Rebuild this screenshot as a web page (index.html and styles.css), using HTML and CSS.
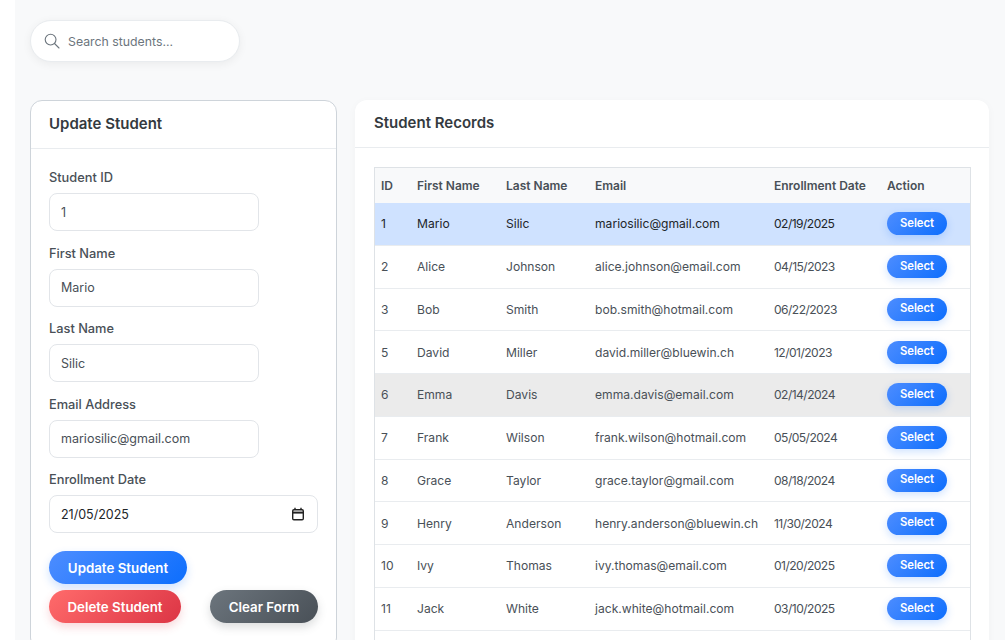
FILE: index.html
```html
<!DOCTYPE html>
<html lang="en">
<head>
    <meta charset="UTF-8">
    <meta name="viewport" content="width=device-width, initial-scale=1.0">
    <title>Student Records</title>
    <link rel="stylesheet" href="styles.css">
</head>
<body>
    <div class="page">
        <div class="search-box">
            <svg class="search-icon" width="16" height="16" viewBox="0 0 16 16" fill="none" stroke="#6c757d" stroke-width="1.1">
                <circle cx="6.6" cy="6.6" r="5.4"/>
                <path d="M10.5 10.5L15 15" stroke-linecap="round"/>
            </svg>
            <input type="text" placeholder="Search students...">
        </div>

        <div class="columns">
            <div class="card form-card">
                <h2 class="card-header">Update Student</h2>
                <form class="card-body">
                    <label for="student-id">Student ID</label>
                    <input class="short" id="student-id" type="text" value="1">
                    <label for="first-name">First Name</label>
                    <input class="short" id="first-name" type="text" value="Mario">
                    <label for="last-name">Last Name</label>
                    <input class="short" id="last-name" type="text" value="Silic">
                    <label for="email">Email Address</label>
                    <input class="short" id="email" type="text" value="mariosilic@gmail.com">
                    <label for="enrollment">Enrollment Date</label>
                    <div class="date-field">
                        <input id="enrollment" type="text" value="21/05/2025">
                        <svg width="14" height="14" viewBox="0 0 14 14" fill="none" stroke="#222" stroke-width="1.4">
                            <rect x="1.7" y="2.7" width="10.6" height="10" rx="1.2"/>
                            <path d="M1.7 5.6h10.6" stroke-width="2"/>
                            <path d="M4 .8v2M10 .8v2"/>
                        </svg>
                    </div>
                    <div class="btn-row">
                        <button type="button" class="btn btn-update">Update Student</button>
                    </div>
                    <div class="btn-row">
                        <button type="button" class="btn btn-delete">Delete Student</button>
                        <button type="button" class="btn btn-clear">Clear Form</button>
                    </div>
                </form>
            </div>

            <div class="card records-card">
                <h2 class="card-header">Student Records</h2>
                <div class="card-body">
                    <table>
                        <thead>
                            <tr>
                                <th class="col-id">ID</th>
                                <th class="col-name">First Name</th>
                                <th class="col-name">Last Name</th>
                                <th class="col-email">Email</th>
                                <th class="col-date">Enrollment Date</th>
                                <th class="col-action">Action</th>
                            </tr>
                        </thead>
                        <tbody>
                            <tr class="selected"><td>1</td><td>Mario</td><td>Silic</td><td>mariosilic@gmail.com</td><td class="date">02/19/2025</td><td><button class="select-btn">Select</button></td></tr>
                            <tr><td>2</td><td>Alice</td><td>Johnson</td><td>alice.johnson@email.com</td><td class="date">04/15/2023</td><td><button class="select-btn">Select</button></td></tr>
                            <tr><td>3</td><td>Bob</td><td>Smith</td><td>bob.smith@hotmail.com</td><td class="date">06/22/2023</td><td><button class="select-btn">Select</button></td></tr>
                            <tr><td>5</td><td>David</td><td>Miller</td><td>david.miller@bluewin.ch</td><td class="date">12/01/2023</td><td><button class="select-btn">Select</button></td></tr>
                            <tr class="hovered"><td>6</td><td>Emma</td><td>Davis</td><td>emma.davis@email.com</td><td class="date">02/14/2024</td><td><button class="select-btn">Select</button></td></tr>
                            <tr><td>7</td><td>Frank</td><td>Wilson</td><td>frank.wilson@hotmail.com</td><td class="date">05/05/2024</td><td><button class="select-btn">Select</button></td></tr>
                            <tr><td>8</td><td>Grace</td><td>Taylor</td><td>grace.taylor@gmail.com</td><td class="date">08/18/2024</td><td><button class="select-btn">Select</button></td></tr>
                            <tr><td>9</td><td>Henry</td><td>Anderson</td><td>henry.anderson@bluewin.ch</td><td class="date">11/30/2024</td><td><button class="select-btn">Select</button></td></tr>
                            <tr><td>10</td><td>Ivy</td><td>Thomas</td><td>ivy.thomas@email.com</td><td class="date">01/20/2025</td><td><button class="select-btn">Select</button></td></tr>
                            <tr><td>11</td><td>Jack</td><td>White</td><td>jack.white@hotmail.com</td><td class="date">03/10/2025</td><td><button class="select-btn">Select</button></td></tr>
                            <tr><td colspan="6"></td></tr>
                        </tbody>
                    </table>
                </div>
            </div>
        </div>
    </div>
</body>
</html>
```

FILE: styles.css
```css
* {
    box-sizing: border-box;
}
html, body {
    margin: 0;
    height: 640px;
    overflow: hidden;
    background-color: #fff;
}
body {
    font-family: Inter, "Open Sans", sans-serif;
    color: #343a40;
}
.page {
    margin: 0 1px 0 15px;
    padding: 20px 15px 0 15px;
    background-color: #f8f9fa;
    min-height: 640px;
}

/* search */
.search-box {
    display: flex;
    align-items: center;
    width: 210px;
    height: 42px;
    padding: 0 13px;
    gap: 8px;
    background-color: #fff;
    border: 1px solid #e9ecef;
    border-radius: 21px;
    box-shadow: 0 2px 10px rgba(0, 0, 0, 0.06);
}
.search-box input {
    flex: 1;
    min-width: 0;
    border: none;
    outline: none;
    padding: 0;
    font: 12.3px Inter, sans-serif;
    color: #495057;
}
.search-box input::placeholder {
    color: #6c757d;
}

/* layout */
.columns {
    display: flex;
    align-items: flex-start;
    gap: 18px;
    margin-top: 38px;
}
.card {
    background-color: #fff;
    border-radius: 12px;
}
.form-card {
    width: 307px;
    flex-shrink: 0;
    border: 1px solid #ced4da;
}
.records-card {
    width: 634px;
    box-shadow: 0 2px 10px rgba(0, 0, 0, 0.03);
}
.card-header {
    margin: 0;
    height: 48px;
    padding: 0 19px;
    line-height: 46px;
    font-size: 15px;
    font-weight: 600;
    color: #343a40;
    border-bottom: 1px solid #e9ecef;
}
.form-card .card-header {
    padding-left: 18px;
}
.form-card .card-body {
    padding: 20px 18px 20px;
}
.records-card .card-body {
    padding: 19px 18px 20px 19px;
}

/* form */
label {
    display: block;
    height: 17px;
    margin-bottom: 7px;
    line-height: 17px;
    font-size: 12.8px;
    font-weight: 500;
    color: #495057;
}
form input {
    display: block;
    width: 100%;
    height: 38px;
    padding: 0 11px;
    margin-bottom: 13.5px;
    font: 12.5px Inter, sans-serif;
    color: #495057;
    background-color: #fff;
    border: 1px solid #e2e5e9;
    border-radius: 8px;
}
form input.short {
    width: 210px;
}
.date-field {
    position: relative;
    margin-bottom: 18px;
}
.date-field input {
    margin-bottom: 0;
    color: #212529;
}
.date-field svg {
    position: absolute;
    right: 13px;
    top: 12px;
}
.btn-row {
    display: flex;
    justify-content: space-between;
    margin-bottom: 6px;
}
.btn {
    height: 33px;
    padding: 0;
    border: none;
    border-radius: 17px;
    font: 600 13.3px Inter, sans-serif;
    color: #fff;
}
.btn-update {
    width: 138px;
    background: linear-gradient(135deg, #4d8dff, #0d6efd);
    box-shadow: 0 4px 10px rgba(13, 110, 253, 0.2);
}
.btn-delete {
    width: 132px;
    background: linear-gradient(135deg, #ff6b6b, #dc3545);
    box-shadow: 0 4px 10px rgba(220, 53, 69, 0.2);
}
.btn-clear {
    width: 108px;
    background: linear-gradient(135deg, #6c757d, #495057);
    box-shadow: 0 4px 10px rgba(73, 80, 87, 0.2);
}

/* table */
table {
    width: 597px;
    table-layout: fixed;
    border-collapse: separate;
    border-spacing: 0;
    border: 1px solid #dee2e6;
    font-size: 12.1px;
    color: #495057;
}
.col-id { width: 36px; }
.col-name { width: 89px; }
.col-email { width: 179px; }
.col-date { width: 113px; }
.col-action { width: 89px; }
th {
    height: 35px;
    padding: 0 6px 1px;
    text-align: left;
    font-size: 12px;
    font-weight: 600;
    background-color: #f8f9fa;
}
td {
    height: 42.75px;
    padding: 0 6px;
    white-space: nowrap;
    border-bottom: 1px solid #e9ecef;
}
td.date {
    letter-spacing: -0.55px;
}
tr.selected td {
    background-color: #cfe2ff;
    color: #212529;
}
tr.hovered td {
    background-color: #ebebeb;
}
.select-btn {
    display: block;
    width: 60px;
    height: 23px;
    padding: 0 0 2px;
    border: none;
    border-radius: 12px;
    font: 600 11.3px Inter, sans-serif;
    color: #fff;
    background: linear-gradient(135deg, #4d8dff, #0d6efd);
    box-shadow: 0 3px 8px rgba(13, 110, 253, 0.2);
}
```
